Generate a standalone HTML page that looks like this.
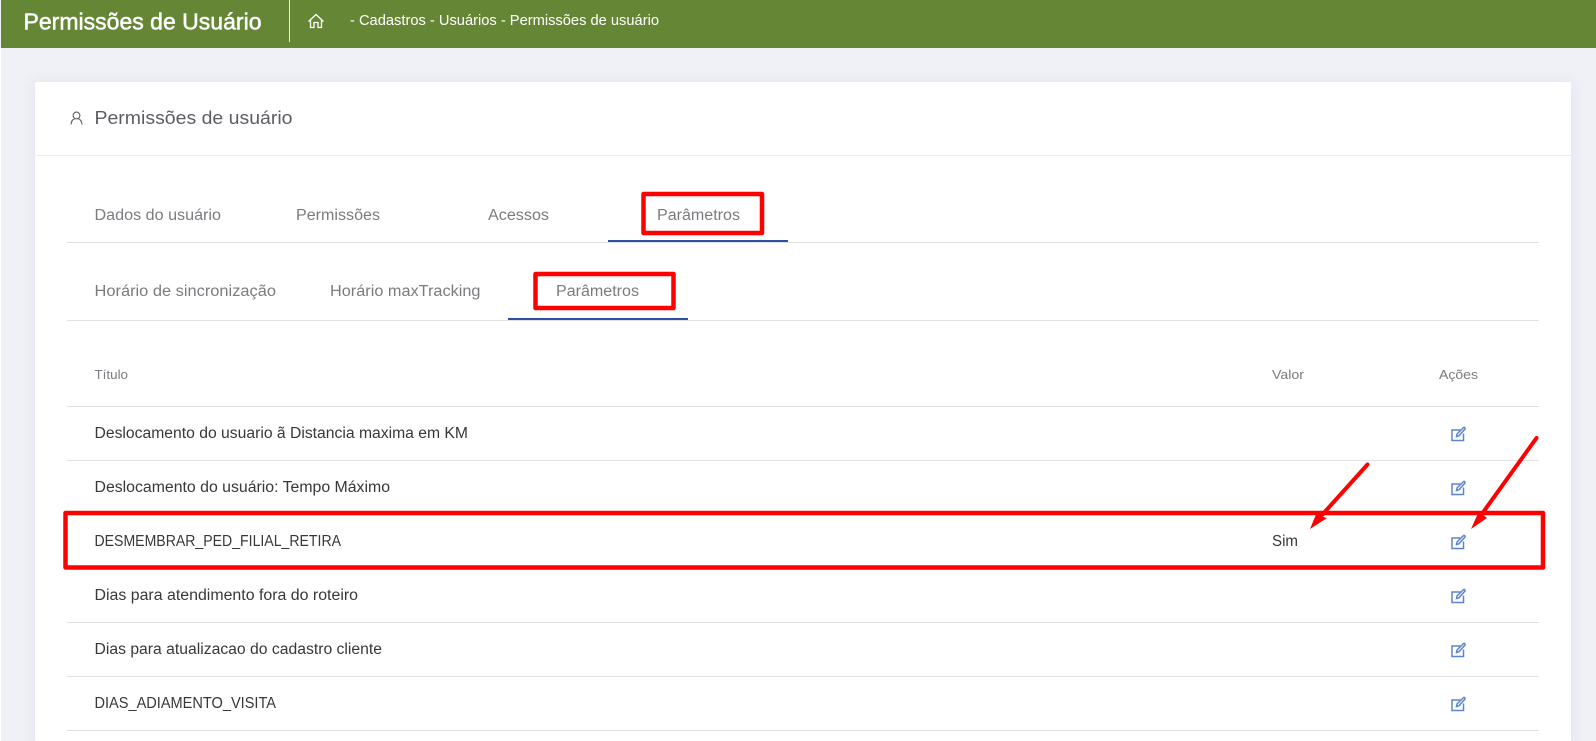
<!DOCTYPE html>
<html lang="pt-BR">
<head>
<meta charset="utf-8">
<title>Permissões de Usuário</title>
<style>
html,body{margin:0;padding:0;width:1596px;height:741px;overflow:hidden;background:#f0f1f7}
svg{display:block;position:absolute;left:0;top:0}
text{font-family:"Liberation Sans",sans-serif}
</style>
</head>
<body>
<svg width="1596" height="741" viewBox="0 0 1596 741" xmlns="http://www.w3.org/2000/svg">
<defs>
<filter id="s" x="-5%" y="-5%" width="110%" height="110%"><feDropShadow dx="0" dy="0" stdDeviation="6" flood-color="#52577a" flood-opacity="0.10"/></filter>
<g id="e" fill="none" stroke="#5d84cf" stroke-width="1.500">
<path d="M9.500 3H1v10.500h11.500V6.500"/>
<path d="M5.500 9.500l.6-2.600L12.200.9c.5-.5 1.200-.5 1.600-.1s.4 1.100-.1 1.600L7.900 8.800z"/>
</g>
</defs>
<rect x="0" y="0" width="1596" height="741" fill="#f0f1f7"/>
<rect x="0" y="48" width="1" height="693" fill="#fff"/>
<rect x="1" y="0" width="1595" height="48" fill="#658735"/>
<rect x="289" y="0" width="1" height="42" fill="#e8eee0"/>
<text x="23.500" y="29.500" font-size="23" fill="#fff" stroke="#fff" stroke-width=".5" textLength="238" lengthAdjust="spacingAndGlyphs">Permissões de Usuário</text>
<g fill="none" stroke="#fff" stroke-width="1.300">
<path d="M308.500 21.500L316 14.500l7.500 7M310.500 20v7.500h3.500v-5h4v5h3.500V20"/>
</g>
<text x="350" y="25" font-size="14.500" fill="#fff" textLength="309" lengthAdjust="spacingAndGlyphs">- Cadastros - Usuários - Permissões de usuário</text>

<rect x="35" y="82" width="1536" height="670" fill="#fff" filter="url(#s)"/>
<rect x="35" y="155" width="1536" height="1" fill="#ebedf2"/>
<g fill="none" stroke="#5c5c64" stroke-width="1.100">
<circle cx="76.500" cy="115.500" r="3.400"/>
<path d="M71 124.500c.3-3.500 2-5.200 3.500-5.700M82 124.500c-.3-3.500-2-5.200-3.500-5.700"/>
</g>
<text x="94.500" y="124" font-size="18.500" fill="#5c5c64" textLength="198" lengthAdjust="spacingAndGlyphs">Permissões de usuário</text>

<g font-size="15.500" fill="#7b7b80">
<text x="94.500" y="220" textLength="126.500" lengthAdjust="spacingAndGlyphs">Dados do usuário</text>
<text x="296" y="220" textLength="84" lengthAdjust="spacingAndGlyphs">Permissões</text>
<text x="488" y="220" textLength="61" lengthAdjust="spacingAndGlyphs">Acessos</text>
<text x="657" y="220" textLength="83" lengthAdjust="spacingAndGlyphs">Parâmetros</text>
<text x="94.500" y="296" textLength="181.500" lengthAdjust="spacingAndGlyphs">Horário de sincronização</text>
<text x="330" y="296" textLength="150.500" lengthAdjust="spacingAndGlyphs">Horário maxTracking</text>
<text x="556" y="296" textLength="83" lengthAdjust="spacingAndGlyphs">Parâmetros</text>
</g>
<rect x="67" y="242" width="1472" height="1" fill="#dfe0e3"/>
<rect x="608" y="240" width="180" height="2" fill="#2f4fa3"/>
<rect x="67" y="320" width="1472" height="1" fill="#dfe0e3"/>
<rect x="508" y="318" width="180" height="2" fill="#2f4fa3"/>

<g font-size="13" fill="#7b7b80">
<text x="94.500" y="379" textLength="33.500" lengthAdjust="spacingAndGlyphs">Título</text>
<text x="1272" y="379" textLength="32" lengthAdjust="spacingAndGlyphs">Valor</text>
<text x="1439" y="379" textLength="39" lengthAdjust="spacingAndGlyphs">Ações</text>
</g>

<g fill="#dfe0e3">
<rect x="67" y="406" width="1472" height="1"/>
<rect x="67" y="460" width="1472" height="1"/>
<rect x="67" y="514" width="1472" height="1"/>
<rect x="67" y="568" width="1472" height="1"/>
<rect x="67" y="622" width="1472" height="1"/>
<rect x="67" y="676" width="1472" height="1"/>
<rect x="67" y="730" width="1472" height="1"/>
</g>

<g font-size="15.500" fill="#38383c">
<text x="94.500" y="438" textLength="373.500" lengthAdjust="spacingAndGlyphs">Deslocamento do usuario ã Distancia maxima em KM</text>
<text x="94.500" y="492" textLength="295.500" lengthAdjust="spacingAndGlyphs">Deslocamento do usuário: Tempo Máximo</text>
<text x="94.500" y="546" textLength="246.500" font-size="16" lengthAdjust="spacingAndGlyphs">DESMEMBRAR_PED_FILIAL_RETIRA</text>
<text x="94.500" y="600" textLength="263.500" lengthAdjust="spacingAndGlyphs">Dias para atendimento fora do roteiro</text>
<text x="94.500" y="654" textLength="287.500" lengthAdjust="spacingAndGlyphs">Dias para atualizacao do cadastro cliente</text>
<text x="94.500" y="708" textLength="181.500" font-size="16" lengthAdjust="spacingAndGlyphs">DIAS_ADIAMENTO_VISITA</text>
<text x="1272" y="546" textLength="26" lengthAdjust="spacingAndGlyphs">Sim</text>
</g>

<use href="#e" x="1451" y="427"/>
<use href="#e" x="1451" y="481"/>
<use href="#e" x="1451" y="535"/>
<use href="#e" x="1451" y="589"/>
<use href="#e" x="1451" y="643"/>
<use href="#e" x="1451" y="697"/>

<g fill="none" stroke="#ff0000" stroke-width="4.500" stroke-linejoin="round">
<rect x="643.500" y="194" width="118.500" height="39"/>
<rect x="535.500" y="274" width="138" height="34"/>
<rect x="65.500" y="513" width="1477.500" height="54.500"/>
</g>
<g stroke="#ff0000" stroke-width="4" stroke-linecap="round" fill="none">
<path d="M1367.500 464.500L1322 515"/>
<path d="M1536.500 438L1484 511"/>
</g>
<g fill="#ff0000">
<path d="M1310 529l7-17 6 5 4 1z"/>
<path d="M1471 529l8-18 4 4 4 3z"/>
</g>
</svg>
</body>
</html>
